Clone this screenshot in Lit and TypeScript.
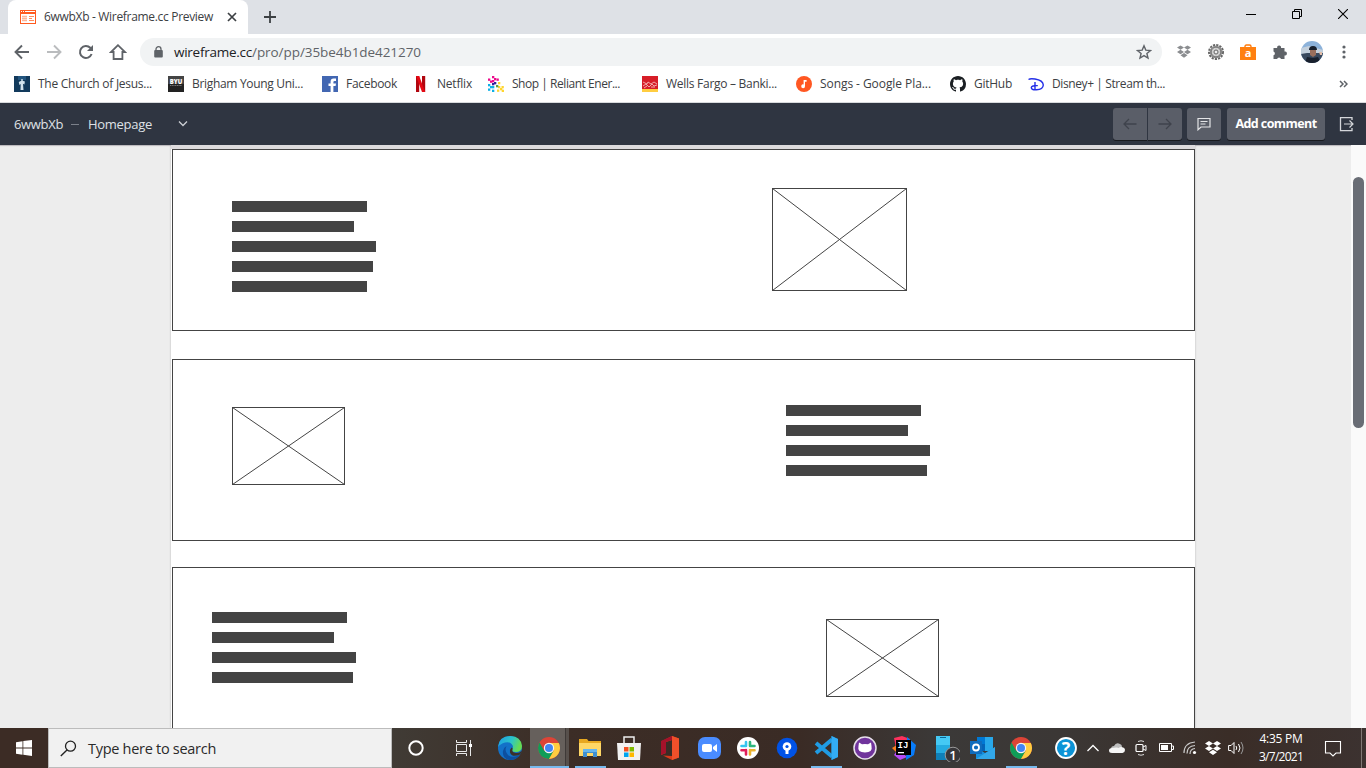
import { LitElement, html, css, svg } from "lit";
import { customElement, property } from "lit/decorators.js";

/* Text that is tracked so that it fills a given width. */
@customElement("fit-text")
class FitText extends LitElement {
  @property({ type: Number }) w = 0;
  static styles = css`
    :host { display: block; white-space: pre; flex: none; }
    .t { display: inline-block; }
  `;
  firstUpdated() {
    const host = this as HTMLElement;
    const natural = host.shadowRoot!.querySelector(".t")!.getBoundingClientRect().width;
    const n = (host.textContent || "").trim().length;
    if (n > 1 && this.w) {
      host.style.letterSpacing = ((this.w - natural) / n).toFixed(3) + "px";
      host.style.width = this.w + "px";
    }
  }
  render() {
    return html`<span class="t"><slot></slot></span>`;
  }
}

const icon = (w: number, h: number, body: unknown) =>
  html`<svg width=${w} height=${h} viewBox="0 0 ${w} ${h}" fill="none">${body}</svg>`;

/* ---------- browser icons ---------- */
const favicon = icon(16, 14, svg`<rect width="16" height="14" fill="#ff5a1f"/><rect x="1" y="4" width="14" height="9" fill="#fff"/><path d="M1 1.5h1M3 1.5h1M5 1.5h10" stroke="#fff"/><path d="M2 6.5h5M2 8.5h5M2 10.5h5" stroke="#ffb597" stroke-width="1.4"/><path d="M9 6.5h5M9 8.5h3M9 10.5h5" stroke="#ff8a5c"/>`);
const close = icon(10, 10, svg`<path d="M1 1l8 8M9 1l-8 8" stroke="#3c4043" stroke-width="1.7"/>`);
const plus = icon(12, 12, svg`<path d="M6 0v12M0 6h12" stroke="#3c4043" stroke-width="1.8"/>`);
const back = icon(16, 16, svg`<path d="M15 8H2M8 1.5L1.5 8 8 14.5" stroke="#5f6368" stroke-width="1.9"/>`);
const fwd = icon(16, 16, svg`<path d="M1 8h13M8 1.5L14.5 8 8 14.5" stroke="#babcbe" stroke-width="1.9"/>`);
const reload = icon(16, 16, svg`<path d="M13.6 10A6 6 0 1 1 12.3 3.8L14 5.5" stroke="#5f6368" stroke-width="2"/><path d="M15 1v6H9z" fill="#5f6368"/>`);
const home = icon(18, 18, svg`<path d="M9 2.2L2 9h2.6v7h8.8V9H16z" stroke="#5f6368" stroke-width="1.8"/>`);
const lock = icon(9, 12, svg`<rect x=".2" y="4" width="8.6" height="7.5" rx="1" fill="#5f6368"/><path d="M2 5V3.2a2.5 2.5 0 0 1 5 0V5" stroke="#5f6368" stroke-width="1.3"/>`);
const star = icon(16, 16, svg`<path d="M8 1.8l1.8 4.3 4.7.4-3.6 3 1.1 4.6L8 11.6l-4 2.5 1.1-4.6-3.6-3 4.7-.4z" stroke="#5f6368" stroke-width="1.4"/>`);
const boxes = (c: string, w: number, h: number) => html`<svg width=${w} height=${h} viewBox="0 0 16 14" fill=${c}><path d="M4 0l4 2.5L4 5 0 2.5zM12 0l4 2.5L12 5 8 2.5zM4 5l4 2.5L4 10 0 7.5zM12 5l4 2.5L12 10 8 7.5zM8 8.7l4 2.5L8 14l-4-2.8z"/></svg>`;
const gear = icon(16, 16, svg`<circle cx="8" cy="8" r="7" stroke="#666" stroke-width="2" stroke-dasharray="2.2 1.1"/><circle cx="8" cy="8" r="6.300" fill="#8d8d8d"/><circle cx="8" cy="8" r="4.800" fill="#d0d0d0" stroke="#6a6a6a" stroke-width=".8"/><circle cx="8" cy="8" r="2" fill="#eee" stroke="#666"/>`);
const bag = html`<svg width="16" height="16" viewBox="0 0 16 16" fill="none"><path d="M5 5V2.5q0-1.5 1.5-1.5h3Q11 1 11 2.5V5" stroke="#ff7b0c" stroke-width="1.4"/><path d="M0 3h16v13H0z" fill="#ff8010"/><text class="bag" x="8" y="13" text-anchor="middle">a</text></svg>`;
const puzzle = icon(16, 16, svg`<path d="M1.500 4h3.700a2 2 0 1 1 3.800 0H12.500v3.500a2 2 0 1 1 0 3.900V15H9a2 2 0 0 0-3.900 0H1.500v-3.700a2 2 0 0 0 0-3.800z" fill="#5f6368"/>`);
const avatar = html`<svg width="22" height="22" viewBox="0 0 22 22"><defs><clipPath id="av"><circle cx="11" cy="11" r="11"/></clipPath></defs><g clip-path="url(#av)"><path fill="#8cb2da" d="M0 0h22v22H0z"/><path fill="#c4d0dc" d="M0 7l8-2 14 4v4H0z"/><path fill="#39495e" d="M0 13l6-1h16v10H0z"/><path fill="#9a6f5c" d="M9 9h6v5l-3 2-3-2z"/><path fill="#18202d" d="M8 9q0-4 4-4t4 4zM4 22l2-6 6 1 5-1 3 6z"/><path fill="#e2bda9" d="M18 11h3v3h-2z"/></g></svg>`;
const dots = icon(4, 14, svg`<circle cx="2" cy="2" r="1.6" fill="#5f6368"/><circle cx="2" cy="7" r="1.6" fill="#5f6368"/><circle cx="2" cy="12" r="1.6" fill="#5f6368"/>`);

/* ---------- bookmark icons ---------- */
const church = icon(16, 16, svg`<path fill="#123a5c" d="M0 0h16v16H0z"/><path fill="#22557f" d="M4 0h8v4H4z"/><path fill="#d3e4ee" d="M7.300 3h1.400v1.800l2.200.6-.5 3.200-1.400-.8L9.500 14h-3l.2-6-1.300 1-.6-3 2.500-1.200z"/>`);
const byu = html`<svg width="16" height="16" viewBox="0 0 16 16"><path fill="#444" d="M0 0h16v9H0z"/><path fill="#222" d="M0 8h16v8H0z"/><text class="byu" x="8" y="7.500" text-anchor="middle">BYU</text><path d="M2 9.500h12" stroke="#777" stroke-dasharray="1.200 .500"/></svg>`;
const fb = icon(16, 16, svg`<path fill="#4267b2" d="M0 0h16v16H0z"/><path fill="#fff" d="M8.600 16v-6H6.500V7.500h2.100V5.600q0-3 3-3H14V5h-1.500q-1.100 0-1.100 1.100v1.400H14L13.600 10h-2.200v6z"/>`);
const netflix = icon(16, 16, svg`<path fill="#b1060f" d="M3 0h3.200v16L3 16zM9 0h3.200v16H9z"/><path fill="#e50914" d="M3 0h3.200l6 16H9z"/>`);
const px = (c: string, pts: number[][]) => pts.map(([x, y]) => svg`<rect x=${x} y=${y} width="2.300" height="2.300" fill=${c}/>`);
const reliant = icon(16, 16, svg`${px("#ec0a8c", [[4, 0], [0, 2.5], [4, 4], [6, 2], [8.5, 2.5], [2, 4.5]])}${px("#32209c", [[4, 7], [6, 6]])}${px("#0db0e6", [[0, 8], [2, 10], [0, 12.500], [4, 10], [4, 13.700]])}${px("#ffd52d", [[10, 6], [10, 10], [13.500, 10], [9, 13.500], [12, 12], [13.700, 13.700]])}${px("#5ba044", [[8, 9]])}`);
const wells = icon(16, 16, svg`<path fill="#d71e28" d="M0 0h16v13H0z"/><path fill="#ffcd41" d="M0 13h16v3H0z"/><path d="M1 6l4 2 1-2 3 2 3-2 3 2M1 10l3-2 3 3 3-3 2 2 3-1M2 12l3-2M9 11l4 0" stroke="#f6c9c6" stroke-width=".8"/>`);
const songs = icon(16, 16, svg`<circle cx="8" cy="8" r="8" fill="#ff5722"/><path fill="#fff" d="M7.600 4h3v1.800H9v4.400A1.900 1.900 0 1 1 7.600 8.400z"/>`);
const catPath = "M8 0C3.58 0 0 3.58 0 8c0 3.54 2.29 6.53 5.47 7.59.4.07.55-.17.55-.38 0-.19-.01-.82-.01-1.49-2.01.37-2.53-.49-2.69-.94-.09-.23-.48-.94-.82-1.13-.28-.15-.68-.52-.01-.53.63-.01 1.08.58 1.23.82.72 1.21 1.87.87 2.33.66.07-.52.28-.87.51-1.07-1.78-.2-3.64-.89-3.64-3.95 0-.87.31-1.59.82-2.15-.08-.2-.36-1.02.08-2.12 0 0 .67-.21 2.2.82.64-.18 1.32-.27 2-.27s1.36.09 2 .27c1.53-1.04 2.2-.82 2.2-.82.44 1.1.16 1.92.08 2.12.51.56.82 1.27.82 2.15 0 3.07-1.87 3.75-3.65 3.95.29.25.54.73.54 1.48 0 1.07-.01 1.93-.01 2.2 0 .21.15.46.55.38A8.01 8.01 0 0 0 16 8c0-4.42-3.58-8-8-8z";
const github = icon(16, 16, svg`<path fill="#1b1f23" d=${catPath}/>`);
const disney = icon(16, 16, svg`<path d="M.500 3.500Q2 2.300 7 3q8 1.200 8.300 6Q15 13.500 8.500 13.800q-5 .200-5.200-2.200 0-2.200 6.500-2M7 6v8" stroke="#2430e8" stroke-width="1.400"/>`);

const bookmarks: [unknown, string, number, number][] = [
  [church, "The Church of Jesus...", 114, 154],
  [byu, "Brigham Young Uni...", 111, 154],
  [fb, "Facebook", 51, 91],
  [netflix, "Netflix", 35, 75],
  [reliant, "Shop | Reliant Ener...", 108, 154],
  [wells, "Wells Fargo – Banki...", 111, 154],
  [songs, "Songs - Google Pla...", 111, 154],
  [github, "GitHub", 38, 78],
  [disney, "Disney+ | Stream th...", 113, 154],
];

/* ---------- taskbar icons ---------- */
const edge = html`<svg width="24" height="24" viewBox="0 0 24 24"><defs><linearGradient id="e1" x2="1" y2=".3"><stop stop-color="#1e9de6"/><stop offset=".6" stop-color="#2cc5c8"/><stop offset="1" stop-color="#66db52"/></linearGradient></defs><circle cx="12" cy="12" r="12" fill="#1371c8"/><path fill="url(#e1)" d="M0 11Q1 0 12.500 0 23 .500 24 10q0 6-6.500 6-4 0-3.500-2.500 1.500-1.500.700-4Q12.500 5 7 6.500 2 8 0 11z"/><path fill="#0d4f9f" d="M8.500 10Q6 15 10 19q5 4 12-.600Q18 24.500 11 24q-7-2-6-9 .700-3.500 3.500-5z"/><path fill="#3b3029" d="M14.500 13.500q-1 3 3.500 3.500 3.500.300 6-2.500-.500 2-2 4-8 3.500-10-2-.500-3 1.500-5 1.600.300 1 2z"/></svg>`;
const chrome = icon(22, 22, svg`<circle cx="11" cy="11" r="11" fill="#dc4437"/><path fill="#0f9d58" d="M1.500 5.500A11 11 0 0 0 11 22l5-8.200-5 2-4.800-2z"/><path fill="#ffcd40" d="M11 6h9.800A11 11 0 0 1 11 22l4.800-8.400z"/><circle cx="11" cy="11" r="5.200" fill="#f5f5f5"/><circle cx="11" cy="11" r="4" fill="#4285f4"/>`);
const explorer = icon(22, 20, svg`<path fill="#e8a820" d="M0 1h8l1.500 2H22v15H0z"/><path fill="#ffd766" d="M0 5h22v13H0z"/><path fill="#3f8fd0" d="M4 11h14v8h-4v-4H8v4H4z"/><path fill="#65b5ee" d="M4 11h14v3H4z"/>`);
const store = icon(24, 24, svg`<path d="M7 8V1h10v7" stroke="#eee" stroke-width="1.500"/><path fill="#f2f2f2" d="M0 7h24l-1 17H1z"/><path fill="#f25022" d="M7 11h4.500v4.500H7z"/><path fill="#7fba00" d="M12.500 11H17v4.500h-4.500z"/><path fill="#00a4ef" d="M7 16.500h4.500V21H7z"/><path fill="#ffb900" d="M12.500 16.500H17V21h-4.500z"/>`);
const office = icon(20, 24, svg`<path fill="#d83b1a" d="M12 0l7 2.500v19L12 24l-9-4.500 9 .500V4L6 6v11l-5 2V5.500z"/><path fill="#f0502a" d="M12 0l7 2.500v19L12 24z"/><path fill="#a5122a" d="M12 0L1 5v14l5-2V6l6-2z"/>`);
const zoomI = icon(23, 22, svg`<rect width="23" height="22" rx="7" fill="#4a8cff"/><rect x="4" y="7" width="10" height="8" rx="2" fill="#fff"/><path fill="#fff" d="M15 10l4-3v8l-4-3z"/>`);
const slack = icon(22, 22, svg`<circle cx="11" cy="11" r="11" fill="#fff"/><g stroke-width="2.600" stroke-linecap="round"><path d="M9 5v4M4.500 9H9" stroke="#36c5f0"/><path d="M13 5v4M13 9h4.500" stroke="#2eb67d"/><path d="M13 13.200h4.500M13 13v4.500" stroke="#ecb22e"/><path d="M4.500 13.200H9M9 13v4.500" stroke="#e01e5a"/></g>`);
const source = icon(22, 22, svg`<circle cx="11" cy="11" r="10.300" fill="#0052e6"/><circle cx="11" cy="9.500" r="4.300" fill="#fff"/><circle cx="11" cy="9.500" r="1.600" fill="#0052e6"/><path fill="#fff" d="M9.500 13h3v4h-3z"/>`);
const code = icon(24, 24, svg`<path fill="#1389d2" d="M17.500 0L24 3v18l-6.500 3z"/><path d="M18 3.500L2 17M2 7l16 13.500" stroke="#209ce4" stroke-width="4"/><path fill="#33adf5" d="M17.500 0L24 3v18l-6.500 3z"/>`);
const ghDesk = icon(24, 24, svg`<circle cx="12" cy="12" r="11" fill="#70349c" stroke="#e6dfea" stroke-width="1.500"/><path fill="#fff" d="M6 6.500l3 1.800q3-.6 6 0l3-1.800.500 3.500q1.500 6.500-6.500 6.500T5.500 10z"/>`);
const idea = html`<svg width="24" height="24" viewBox="0 0 24 24"><path fill="#fe315d" d="M2 2l8-2 8 3-3 10L5 17z"/><path fill="#fc801d" d="M0 12l5-3v8z"/><path fill="#b74af7" d="M2 19l4-6 9 8-7 3z"/><path fill="#087cfa" d="M15 1l9 8-2 10-8 5z"/><path fill="#000" d="M4 4h15v15H4z"/><text class="ij" x="5.500" y="12">IJ</text><path fill="#fff" d="M6 16h6v1.300H6z"/></svg>`;
const phone = html`<svg width="34" height="28" viewBox="0 0 34 28"><path fill="#0f80b8" d="M10 2h14v24H10z"/><path fill="#45c9f4" d="M10 2h14v9H10z"/><path fill="#24abe0" d="M10 11h14v8H10z"/><path d="M14 3.500h6" stroke="#0a6797"/><circle cx="27" cy="21" r="7.800" fill="#38373a" stroke="#999"/><text class="one" x="27" y="25.500" text-anchor="middle">1</text></svg>`;
const outlook = html`<svg width="25" height="22" viewBox="0 0 25 22"><path fill="#28a8ea" d="M7 0h16v14H7z"/><path fill="#0078d4" d="M7 0h8v7H7z"/><path fill="#0364b8" d="M7 7h8v7H7z"/><path fill="#1490df" d="M6 10l9 6 10-6v12H6z"/><path fill="#50bdf3" d="M25 10L6 22h19z" opacity=".5"/><path fill="#0f6cbd" d="M0 4h12v13H0z"/><circle cx="6" cy="10.500" r="3" fill="none" stroke="#fff" stroke-width="1.800"/></svg>`;

type Task = { art: unknown; gap?: number; open?: boolean; active?: boolean };
const tasks: Task[] = [
  { art: edge },
  { art: chrome, active: true, open: true },
  { art: explorer, gap: 2, open: true },
  { art: store },
  { art: office, gap: 2 },
  { art: zoomI },
  { art: slack },
  { art: source },
  { art: code, open: true },
  { art: ghDesk },
  { art: idea },
  { art: phone },
  { art: outlook },
  { art: chrome, open: true },
];

const tray: [number, unknown][] = [
  [28, html`<svg width="22" height="22" viewBox="0 0 22 22"><circle cx="11" cy="11" r="10" fill="#0c93d6" stroke="#fff" stroke-width="1.800"/><text class="help" x="11" y="17.500" text-anchor="middle">?</text></svg>`],
  [26, icon(12, 8, svg`<path d="M.500 7L6 1.500 11.500 7" stroke="#fff" stroke-width="1.300"/>`)],
  [22, icon(16, 10, svg`<path fill="#bdbdbd" d="M2 6q0-3 3-3 2-4 6-2 2 .500 2 3l-4 5H3z"/><path fill="#f5f5f5" d="M3 10Q0 10 0 7.500T3 5q5-1 7 0 0-1 2.500-1 3.500.500 3.500 3t-2.500 3z"/>`)],
  [26, icon(12, 16, svg`<path d="M3 1.500q3-1.500 6 0M3 14.500q3 1.500 6 0" stroke="#ddd"/><rect x="1" y="4.500" width="7" height="7" rx="1" stroke="#fff" stroke-width="1.200"/><path d="M8 7l3-1.500v5L8 9" stroke="#fff"/>`)],
  [24, icon(15, 10, svg`<path d="M.500.500h12v8H.500zM13 3h1.500v3.500H13" stroke="#fff"/><path fill="#fff" d="M2 2h7v5H2z"/>`)],
  [23, icon(14, 14, svg`<path d="M1 12Q1 2 12 1M4 12.500Q4 5 12 4.500M7 13q0-5 5-5.500" stroke="#c9c9c9" stroke-width="1.200"/><circle cx="11.500" cy="11.500" r="1.600" fill="#fff"/>`)],
  [23, boxes("#fff", 16, 14)],
  [24, icon(17, 14, svg`<path d="M.600 4.500h2.500L6 1.500v11l-2.900-3H.600z" stroke="#fff"/><path d="M8 5q1.500 2 0 4M10.500 3q3 4 0 8" stroke="#fff"/><path d="M13 1q4 6 0 12" stroke="#999"/>`)],
];

/* ---------- wireframe stencils ---------- */
const lines = (widths: number[]) => html`<div class="lines">${widths.map((w) => html`<i style="width:${w}px"></i>`)}</div>`;
const picture = (w: number, h: number) => html`<svg width=${w} height=${h} fill="none" stroke="#444"><rect x=".5" y=".5" width=${w - 1} height=${h - 1}/><path d="M.5.5L${w - .5} ${h - .5}M${w - .5}.5L.5 ${h - .5}"/></svg>`;

@customElement("app-root")
class AppRoot extends LitElement {
  static styles = css`
    :host { display: flex; flex-direction: column; width: 1366px; height: 768px; overflow: hidden; background: #fff; font: 12px/16px "Open Sans", "Noto Sans", sans-serif; color: #3c4043; }
    * { box-sizing: border-box; }
    svg { display: block; flex: none; }
    .tabs { height: 34px; flex: none; background: #dee1e6; display: flex; align-items: center; padding-left: 8px; }
    .tab { width: 240px; height: 34px; background: #fff; border-radius: 8px 8px 0 0; display: flex; align-items: center; padding: 0 11px 0 12px; }
    .tab fit-text { margin-left: 8px; margin-right: auto; }
    .plus { margin-left: 16px; }
    .win { margin-left: auto; display: flex; align-items: center; padding: 0 18px 6px 0; gap: 36px; }
    .bar { height: 35px; flex: none; display: flex; align-items: center; padding-left: 14px; }
    .nav { display: flex; align-items: center; gap: 16px; width: 126px; flex: none; }
    .nav > :last-child { margin-left: -1px; }
    .omni { width: 1022px; flex: none; height: 28px; border-radius: 14px; background: #f1f3f4; display: flex; align-items: center; padding: 0 10px 0 14px; font-size: 13.500px; }
    .omni .a { margin-left: 11px; color: #202124; }
    .omni .b { color: #5f6368; margin-right: auto; }
    .ext { display: flex; align-items: center; margin-left: 15px; }
    .ext > * { flex: none; display: flex; justify-content: center; }
    .s { width: 14px; } .m { width: 50px; }
    .marks { height: 34px; flex: none; display: flex; align-items: center; padding: 0 18px 4px 14px; border-bottom: 1px solid #d8dadd; }
    .mark { display: flex; align-items: center; gap: 8px; flex: none; }
    .more { margin-left: auto; }
    .head { height: 42px; flex: none; background: #2f3541; display: flex; align-items: center; padding: 0 12px 0 14px; color: #dfe1e5; font-size: 13px; font-weight: 500; }
    .dash { width: 8px; height: 1px; background: #7b808a; margin: 0 9px 0 8px; }
    .chev { margin-left: 26px; }
    .btns { margin-left: auto; display: flex; align-items: center; }
    .btn { width: 34px; height: 32px; background: #5a5e68; border-radius: 3px; display: flex; align-items: center; justify-content: center; box-shadow: 0 1px 0 #181a1e; }
    .btn.l { border-radius: 3px 0 0 3px; margin-right: 1px; }
    .btn.r { border-radius: 0 3px 3px 0; margin-right: 5px; }
    .btn.add { width: 98px; margin: 0 14px 0 6px; color: #fff; font-weight: 700; font-size: 12.500px; }
    .view { flex: 1; min-height: 0; overflow: hidden; display: flex; background: #ededed; box-shadow: inset 0 2px 1px -1px #b9b5ba; }
    .page { width: 1024px; margin-left: 171px; background: #fff; border-top: 4px solid #dddbdd; box-shadow: 0 0 2px #b5b5b5; padding-left: 1px; clip-path: inset(0 -4px); }
    .sec { width: 1023px; height: 182px; border: 1px solid #444; display: flex; align-items: flex-start; margin-bottom: 28px; }
    .sec.two { margin-bottom: 26px; }
    .lines { display: flex; flex-direction: column; gap: 9px; width: 144px; flex: none; }
    .lines i { height: 11px; background: #444; }
    .one-l { margin: 51px 0 0 59px; } .one-p { margin: 38px 0 0 396px; }
    .two-p { margin: 47px 0 0 59px; } .two-l { margin: 45px 0 0 441px; }
    .three-l { margin: 44px 0 0 39px; } .three-p { margin: 51px 0 0 470px; }
    .scroll { width: 15px; margin-left: auto; background: #fafafa; padding: 32px 2px 0; }
    .thumb { width: 11px; height: 251px; border-radius: 5.500px; background: #696d75; }
    .task { height: 40px; flex: none; display: flex; align-items: stretch; background: linear-gradient(90deg, #3c2c25 0, #3c2c25 48px, #403b35 392px, #3c2d26 560px, #3a2b25 800px, #3b3938 940px, #3b3735 1060px, #3a2d27 1230px, #3c3230 1366px); }
    .slot { display: flex; align-items: center; justify-content: center; flex: none; }
    .start { width: 48px; }
    .search { width: 344px; background: #f1f1f1; border: 1px solid #bcbcbc; display: flex; align-items: center; padding-left: 11px; gap: 11px; font-size: 14.500px; color: #2a2a2a; }
    .search fit-text { padding-top: 1px; }
    .w48 { width: 48px; } .w47 { width: 47px; margin-right: 3.500px; }
    .app { width: 39px; }
    .app svg { margin: 0 -4px; }
    .app.open { background: linear-gradient(#76b9ed, #76b9ed) 50% 100% / 31px 2px no-repeat; }
    .app.active { background: linear-gradient(#76b9ed, #76b9ed) 50% 100% / 39px 2px no-repeat, linear-gradient(90deg, #66605c 35px, #3f3a38 35px, #3f3a38 36px, #57504c 36px); }
    .g2 { margin-left: 2px; }
    .tray { margin-left: 11.500px; display: flex; }
    .clock { width: 64px; margin-left: 1px; color: #fff; display: flex; flex-direction: column; align-items: center; padding-top: 2px; font-size: 12px; line-height: 18px; }
    .note { width: 40px; }
    .peek { width: 1px; margin-left: auto; margin-right: 4px; background: #807875; }
    .bag { font: 700 11px "Open Sans", sans-serif; fill: #fff; }
    .byu { font: 900 6px "Open Sans", sans-serif; fill: #fff; }
    .ij { font: 700 9px "Liberation Mono", monospace; fill: #fff; }
    .one { font: 600 13px "Open Sans", sans-serif; fill: #fff; }
    .help { font: 700 18px "Open Sans", sans-serif; fill: #fff; }
  `;

  render() {
    return html`
      <div class="tabs">
        <div class="tab">${favicon}<fit-text w="169">6wwbXb - Wireframe.cc Preview</fit-text>${close}</div>
        <div class="plus">${plus}</div>
        <div class="win">
          ${icon(10, 10, svg`<path d="M0 5.500h10" stroke="#000"/>`)}
          ${icon(10, 10, svg`<path d="M.5 2.500h7v7h-7zM2.500 2.500v-2h7v7h-2" stroke="#000"/>`)}
          ${icon(10, 10, svg`<path d="M0 0l10 10M10 0L0 10" stroke="#000" stroke-width="1.100"/>`)}
        </div>
      </div>
      <div class="bar">
        <div class="nav">${back}${fwd}${reload}${home}</div>
        <div class="omni">${lock}<fit-text class="a" w="78">wireframe.cc</fit-text><fit-text class="b" w="169">/pro/pp/35be4b1de421270</fit-text>${star}</div>
        <div class="ext">
          <span class="s">${boxes("#8b8d90", 14, 13)}</span><span class="m">${gear}</span>
          <span class="s">${bag}</span><span class="m">${puzzle}</span>
          <span class="s">${avatar}</span><span class="m">${dots}</span>
        </div>
      </div>
      <div class="marks">
        ${bookmarks.map(([art, label, w, slot]) => html`<div class="mark" style="width:${slot}px">${art}<fit-text .w=${w}>${label}</fit-text></div>`)}
        <div class="more">${icon(9, 8, svg`<path d="M1 1l3 3-3 3M5 1l3 3-3 3" stroke="#5f6368" stroke-width="1.500"/>`)}</div>
      </div>
      <div class="head">
        <fit-text w="49">6wwbXb</fit-text><i class="dash"></i><fit-text w="64">Homepage</fit-text>
        <div class="chev">${icon(10, 6, svg`<path d="M1 .500l4 4 4-4" stroke="#cdd0d5" stroke-width="1.300"/>`)}</div>
        <div class="btns">
          <div class="btn l">${icon(14, 12, svg`<path d="M13.500 6H1M6 1L1 6l5 5" stroke="#3f434c" stroke-width="1.300"/>`)}</div>
          <div class="btn r">${icon(14, 12, svg`<path d="M.500 6H13M8 1l5 5-5 5" stroke="#3f434c" stroke-width="1.300"/>`)}</div>
          <div class="btn">${icon(14, 14, svg`<path d="M1 1.500h12v8.500H4l-3 2.800z" stroke="#e3e4e6" stroke-width="1.200"/><path d="M3.500 4.500h7M3.500 7h5" stroke="#e3e4e6"/>`)}</div>
          <div class="btn add"><fit-text w="81">Add comment</fit-text></div>
          ${icon(15, 16, svg`<path d="M13 4V1.600H1.500v13H13V12" stroke="#d5d7db" stroke-width="1.300"/><path d="M5 8h9M10.500 4.500L14 8l-3.500 3.500" stroke="#d5d7db" stroke-width="1.200"/>`)}
        </div>
      </div>
      <div class="view">
        <div class="page">
          <div class="sec"><div class="one-l">${lines([135, 122, 144, 141, 135])}</div><div class="one-p">${picture(135, 103)}</div></div>
          <div class="sec two"><div class="two-p">${picture(113, 78)}</div><div class="two-l">${lines([135, 122, 144, 141])}</div></div>
          <div class="sec"><div class="three-l">${lines([135, 122, 144, 141])}</div><div class="three-p">${picture(113, 78)}</div></div>
        </div>
        <div class="scroll"><div class="thumb"></div></div>
      </div>
      <div class="task">
        <div class="slot start">${icon(16, 16, svg`<path fill="#fff" d="M0 2.200L6.500 1.200v6.300H0zM7.300 1.100L16 0v7.500H7.300zM0 8.400h6.500v6.300L0 13.800zM7.300 8.400H16V16l-8.700-1.200z"/>`)}</div>
        <div class="search">${icon(17, 17, svg`<circle cx="10.500" cy="6.200" r="5" stroke="#222" stroke-width="1.300"/><path d="M7 10L.800 16" stroke="#222" stroke-width="1.400"/>`)}<fit-text w="128">Type here to search</fit-text></div>
        <div class="slot w48">${icon(16, 16, svg`<circle cx="8" cy="8" r="6.700" stroke="#fff" stroke-width="2"/>`)}</div>
        <div class="slot w47">${icon(16, 16, svg`<path d="M.500 0v2.500h10V0M.500 4.500h10v7H.500zM.500 16v-2.500h10V16M14.500 0v16" stroke="#e8e8e8"/><path fill="#fff" d="M13 4h3v3h-3z"/>`)}</div>
        ${tasks.map((t) => html`<div class="slot app ${t.open ? "open" : ""} ${t.active ? "active" : ""} ${t.gap ? "g2" : ""}">${t.art}</div>`)}
        <div class="tray">${tray.map(([w, art]) => html`<div class="slot" style="width:${w}px">${art}</div>`)}</div>
        <div class="clock"><fit-text w="43">4:35 PM</fit-text><fit-text w="44">3/7/2021</fit-text></div>
        <div class="slot note">${icon(20, 17, svg`<path d="M2.500 1.500h15v11.500H13l-3 3-3-3H2.500z" stroke="#fff" stroke-width="1.100"/>`)}</div>
        <i class="peek"></i>
      </div>
    `;
  }
}
